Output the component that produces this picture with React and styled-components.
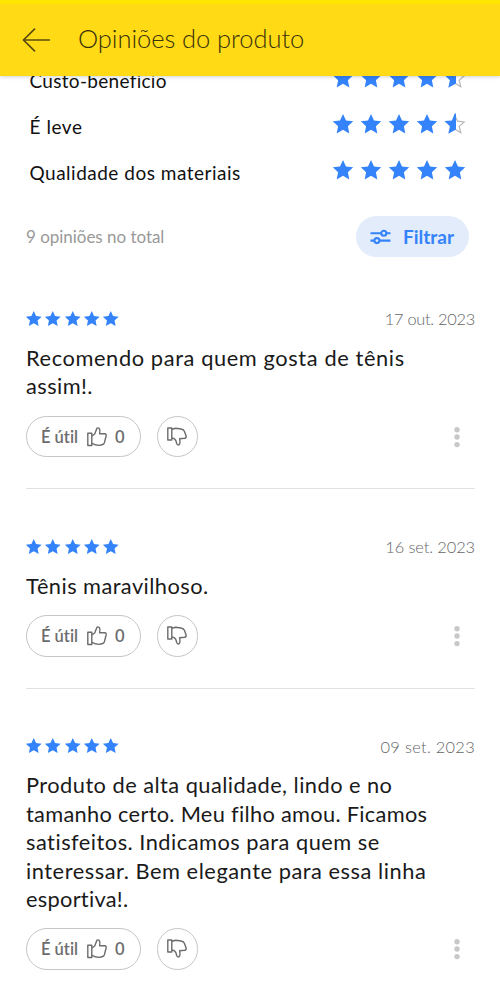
import React from "react";
import styled, { createGlobalStyle } from "styled-components";

const GlobalStyle = createGlobalStyle`
  *, *::before, *::after { box-sizing: border-box; }
  body {
    margin: 0;
    background: #fff;
    overflow: hidden;
    font-family: Lato, "Open Sans", sans-serif;
    font-variant-ligatures: none;
  }
  button { font: inherit; font-variant-ligatures: none; padding: 0; border: 0; background: none; }
  svg { display: block; flex: none; overflow: visible; }
`;

const Screen = styled.main`
  height: 992px;
  overflow: hidden;
  display: flex;
  flex-direction: column;
  background: #fff;
`;

const Header = styled.header`
  position: relative;
  z-index: 1;
  flex: none;
  height: 76px;
  display: flex;
  align-items: center;
  gap: 27px;
  padding: 0 22px;
  background: #ffda15;
  border-top: 4px solid #ffe600;
  box-shadow: 0 1px 4px rgba(0, 0, 0, 0.18);
`;

const Title = styled.h1`
  margin: 0;
  padding-bottom: 4px;
  font-size: 25.5px;
  font-weight: 300;
  line-height: 32px;
  letter-spacing: ${(p) => p.$spacing}px;
  color: #38310b;
  white-space: nowrap;
`;

const BackButton = styled.button`
  padding-bottom: 1px;
`;

const Ratings = styled.section`
  flex: none;
  margin-top: -19px;
  padding: 0 35px 0 29.5px;
`;

const RatingRow = styled.div`
  height: 46px;
  display: flex;
  align-items: center;
  justify-content: space-between;
`;

const RatingLabel = styled.span`
  font-size: 19px;
  letter-spacing: ${(p) => p.$spacing}px;
  color: #111;
  padding-top: 1px;
`;

const Stars = styled.div`
  display: flex;
  gap: ${(p) => p.$gap}px;
  padding-bottom: ${(p) => p.$lift || 0}px;
`;

const Summary = styled.div`
  flex: none;
  margin-top: 21px;
  height: 41px;
  padding: 0 31.5px 0 26px;
  display: flex;
  align-items: center;
  justify-content: space-between;
`;

const Muted = styled.span`
  font-size: ${(p) => p.$size || 17}px;
  font-weight: ${(p) => p.$weight || 400};
  letter-spacing: ${(p) => p.$spacing}px;
  color: ${(p) => p.$color || "#999"};
  white-space: nowrap;
`;

const FilterButton = styled.button`
  width: 113px;
  height: 41px;
  border-radius: 21px;
  background: #e2ecfb;
  color: #3483fa;
  display: flex;
  align-items: center;
  gap: 12px;
  padding-left: 14.5px;
  font-size: 19px;
  font-weight: 700;
  letter-spacing: ${(p) => p.$spacing}px;
`;

const ReviewList = styled.section`
  flex: none;
  padding: 4.3px 25px 0 26px;
`;

const Review = styled.article`
  padding: 47.4px 0 30.8px;
  border-bottom: 1px solid #dfe1e4;
`;

const ReviewTop = styled.div`
  height: 20px;
  display: flex;
  align-items: center;
  justify-content: space-between;
`;

const ReviewText = styled.p`
  margin: 15.4px 0 15px;
  font-size: 21.8px;
  line-height: 28.4px;
  color: #1a1a1a;
`;

const Line = styled.span`
  display: block;
  white-space: nowrap;
  letter-spacing: ${(p) => p.$spacing}px;
`;

const Actions = styled.div`
  display: flex;
  align-items: center;
  gap: 16px;
  height: 41.5px;
`;

const Pill = styled.button`
  width: ${(p) => p.$width}px;
  height: 41.5px;
  border: 1.25px solid #c5c5c5;
  border-radius: 21px;
  display: flex;
  align-items: center;
  justify-content: ${(p) => (p.$center ? "center" : "flex-start")};
  padding-left: ${(p) => (p.$center ? 0 : 14)}px;
  color: #6c6c6c;
  font-size: 16.5px;
  font-weight: 600;
`;

const HelpfulLabel = styled.span`
  width: 46px;
  text-align: left;
  white-space: nowrap;
`;

const Count = styled.span`
  margin-left: 8px;
`;

const MoreButton = styled.button`
  margin-left: auto;
  margin-right: 15px;
`;

const STAR =
  "M10 0 L13 6.5 L20.2 7.3 L14.9 12.2 L16.3 19.4 L10 15.8 L3.7 19.4 L5.1 12.2 L-0.2 7.3 L7 6.5 Z";

function Star({ size, half }) {
  return (
    <svg width={size} height={size} viewBox="0 0 20 20">
      {half ? (
        <>
          <path d="M10 1.8 L12.5 7.2 L19.2 8 L14.2 12.4 L15.8 18.8 L10 15.3" fill="#fff" stroke="#b8b8b8" strokeWidth="1.2" />
          <path d="M11 -0.4 L11 15.6 L3.3 19.8 L4.9 12.3 L-0.6 7.1 L6.9 6.5 L9.7 -0.4 Z" fill="#3483fa" />
        </>
      ) : (
        <path d={STAR} fill="#3483fa" />
      )}
    </svg>
  );
}

function StarRating({ value, size, gap, lift }) {
  return (
    <Stars $gap={gap} $lift={lift}>
      {[1, 2, 3, 4, 5].map((n) => (
        <Star key={n} size={size} half={value < n} />
      ))}
    </Stars>
  );
}

function ThumbUp() {
  return (
    <svg width="20" height="20" viewBox="0 0 20 20" fill="none" stroke="#6c6c6c" strokeWidth="1.4" strokeLinejoin="round">
      <path d="M0.8 6.3H4.8V18.5H0.8Z" />
      <path d="M4.8 8.8L7.7 7L9.1 3.6L9.7 1.7Q10.8 0.2 12.3 1.5Q13.5 3 12.6 6.7H17.8Q19.5 7 19.1 9L17.4 15.7Q16.8 17.5 15 17.8L12.4 18.4L8 17.7L4.8 16.3" />
    </svg>
  );
}

function ThumbDown() {
  return (
    <svg width="20" height="20" viewBox="0 0 20 20" fill="none" stroke="#6c6c6c" strokeWidth="1.4" strokeLinejoin="round">
      <path d="M0.8 1H4.8V13H0.8Z" />
      <path d="M4.8 2.2L8.7 1.2L14 2Q16.8 2.5 17.5 4.5L19.1 9Q19.4 11 17.7 11.3L12.6 11.8Q13.4 15 12.6 17Q11.2 19.2 9.9 17L8.8 13.5L7.3 11.7L4.8 11" />
    </svg>
  );
}

const ratings = [
  { label: "Custo-benefício", value: 4.5, spacing: 0.3 },
  { label: "É leve", value: 4.5, spacing: 0.55 },
  { label: "Qualidade dos materiais", value: 5, spacing: 0.5 },
];

const reviews = [
  {
    date: "17 out. 2023",
    dateSpacing: -0.28,
    lines: [["Recomendo para quem gosta de tênis", 0.61], ["assim!.", 0.43]],
  },
  { date: "16 set. 2023", dateSpacing: -0.1, lines: [["Tênis maravilhoso.", 0.44]] },
  {
    date: "09 set. 2023",
    dateSpacing: 0.3,
    lines: [
      ["Produto de alta qualidade, lindo e no", 0.46],
      ["tamanho certo. Meu filho amou. Ficamos", 0.3],
      ["satisfeitos. Indicamos para quem se", 0.49],
      ["interessar. Bem elegante para essa linha", 0.54],
      ["esportiva!.", 0.28],
    ],
  },
];

export default function App() {
  return (
    <Screen>
      <GlobalStyle />
      <Header>
        <BackButton aria-label="Voltar">
          <svg width="29" height="24" viewBox="0 0 29 24" fill="none" stroke="#5c4e0c" strokeWidth="1.7">
            <path d="M28 12H1.5M13 0.7L1.5 12L13 23.3" />
          </svg>
        </BackButton>
        <Title $spacing={-0.06}>Opiniões do produto</Title>
      </Header>
      <Ratings>
        {ratings.map((r) => (
          <RatingRow key={r.label}>
            <RatingLabel $spacing={r.spacing}>{r.label}</RatingLabel>
            <StarRating value={r.value} size={20} gap={8} lift={4} />
          </RatingRow>
        ))}
      </Ratings>
      <Summary>
        <Muted $spacing={-0.03}>9 opiniões no total</Muted>
        <FilterButton $spacing={0}>
          <svg width="21" height="16" viewBox="0 0 21 16" fill="none" stroke="#3483fa" strokeWidth="2.1">
            <path d="M0.5 4.2H11M16.5 4.2H20.5M0.5 11.6H4.3M9.5 11.6H20.5" />
            <circle cx="13.8" cy="4.2" r="2.5" />
            <circle cx="6.9" cy="11.6" r="2.5" />
          </svg>
          Filtrar
        </FilterButton>
      </Summary>
      <ReviewList>
        {reviews.map((review) => (
          <Review key={review.date}>
            <ReviewTop>
              <StarRating value={5} size={15.5} gap={3.8} />
              <Muted $size={16.4} $weight={300} $color="#666" $spacing={review.dateSpacing}>{review.date}</Muted>
            </ReviewTop>
            <ReviewText>
              {review.lines.map(([text, spacing]) => (
                <Line key={text} $spacing={spacing}>{text}</Line>
              ))}
            </ReviewText>
            <Actions>
              <Pill $width={114.5}>
                <HelpfulLabel>É útil</HelpfulLabel>
                <ThumbUp />
                <Count>0</Count>
              </Pill>
              <Pill $width={41.5} $center aria-label="Não é útil">
                <ThumbDown />
              </Pill>
              <MoreButton aria-label="Mais opções">
                <svg width="6" height="22" viewBox="0 0 6 22" fill="#c8c8c8">
                  <circle cx="3" cy="3.7" r="2.7" />
                  <circle cx="3" cy="11" r="2.7" />
                  <circle cx="3" cy="18.6" r="2.7" />
                </svg>
              </MoreButton>
            </Actions>
          </Review>
        ))}
      </ReviewList>
    </Screen>
  );
}
